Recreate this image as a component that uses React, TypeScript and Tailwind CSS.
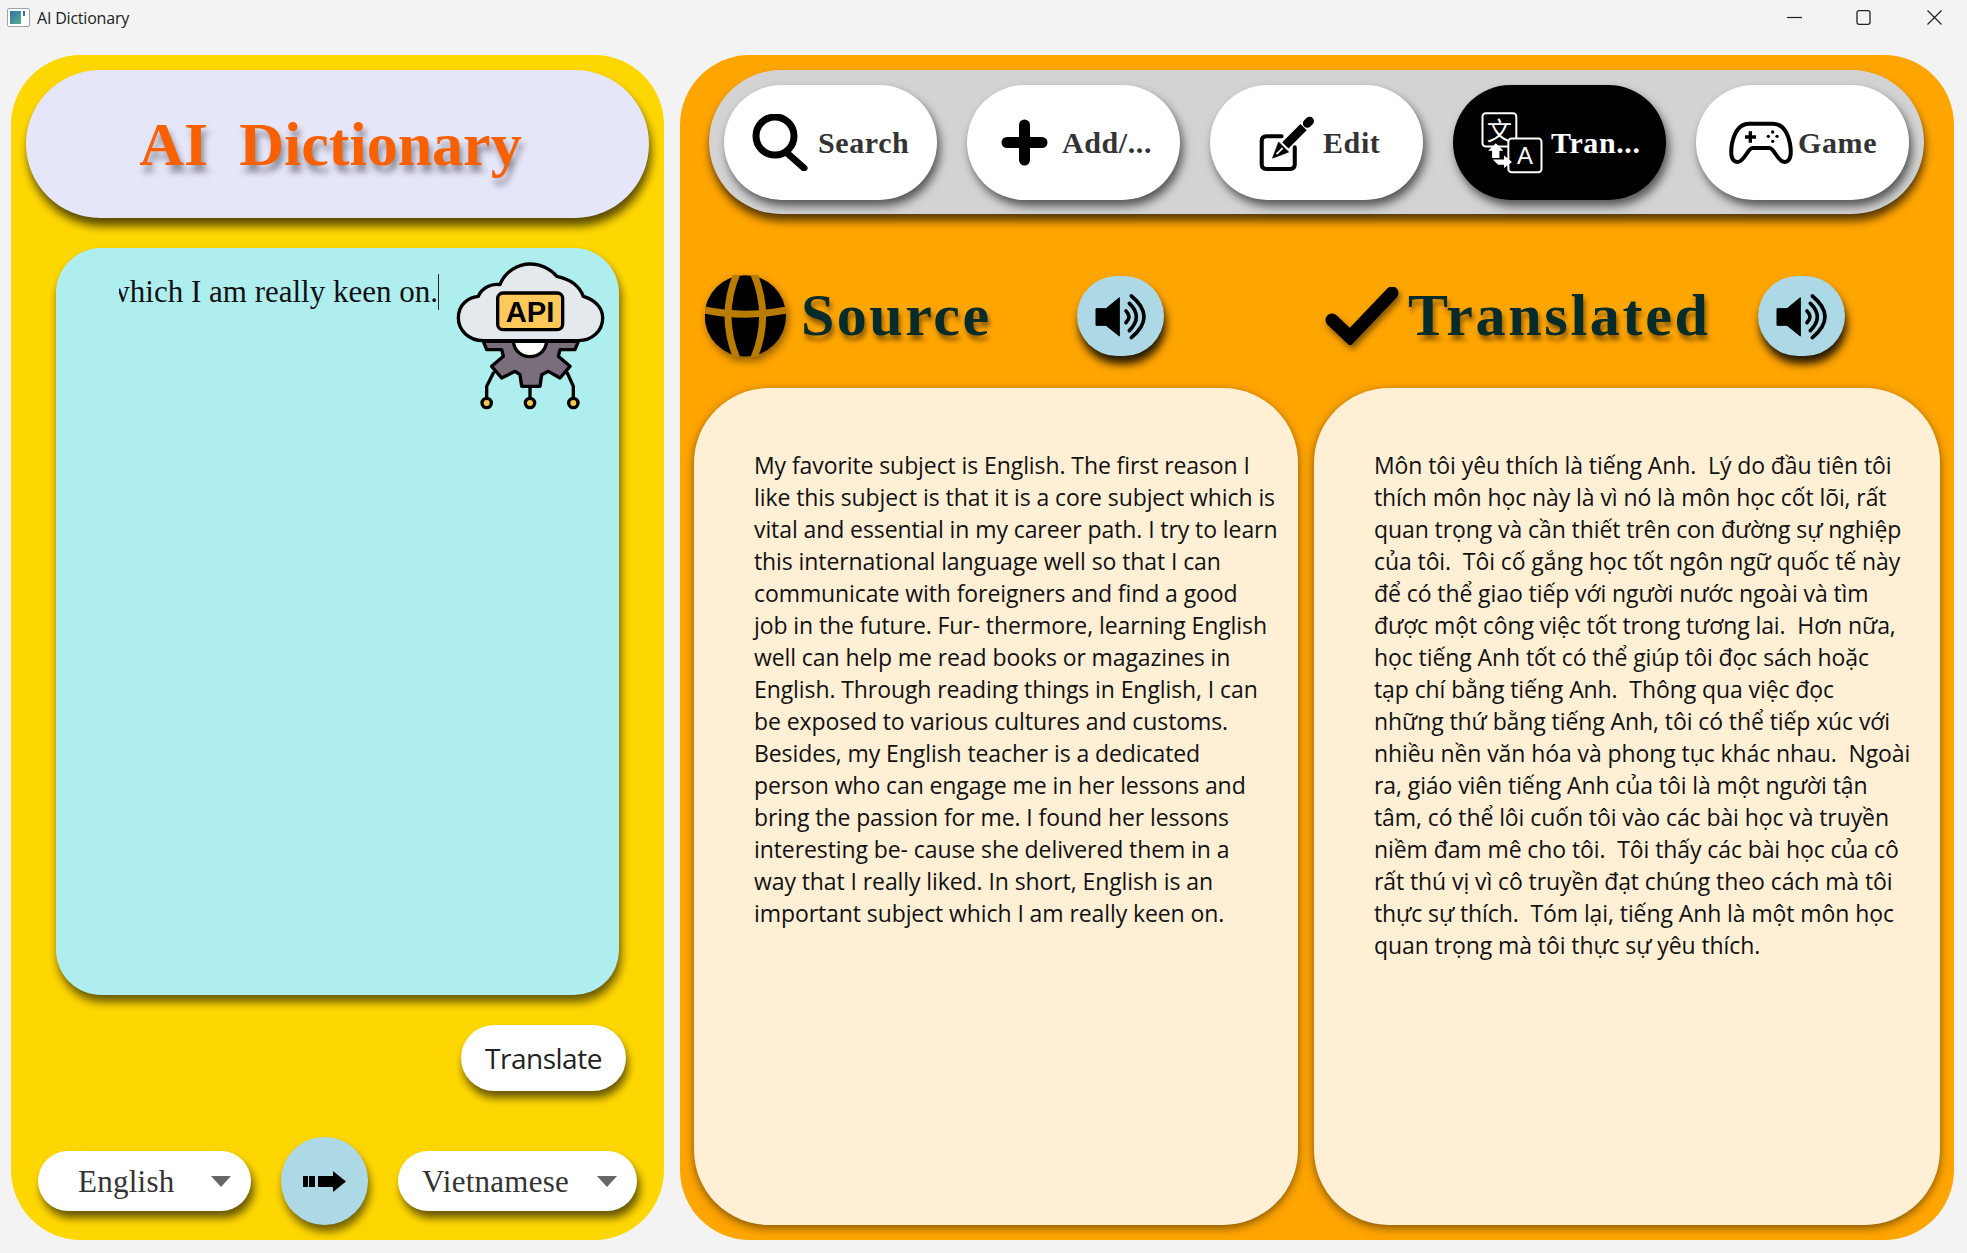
const sourceLines = [
  'My favorite subject is English. The first reason I',
  'like this subject is that it is a core subject which is',
  'vital and essential in my career path. I try to learn',
  'this international language well so that I can',
  'communicate with foreigners and find a good',
  'job in the future. Fur- thermore, learning English',
  'well can help me read books or magazines in',
  'English. Through reading things in English, I can',
  'be exposed to various cultures and customs.',
  'Besides, my English teacher is a dedicated',
  'person who can engage me in her lessons and',
  'bring the passion for me. I found her lessons',
  'interesting be- cause she delivered them in a',
  'way that I really liked. In short, English is an',
  'important subject which I am really keen on.',
];

const translatedLines = [
  'Môn tôi yêu thích là tiếng Anh.  Lý do đầu tiên tôi',
  'thích môn học này là vì nó là môn học cốt lõi, rất',
  'quan trọng và cần thiết trên con đường sự nghiệp',
  'của tôi.  Tôi cố gắng học tốt ngôn ngữ quốc tế này',
  'để có thể giao tiếp với người nước ngoài và tìm',
  'được một công việc tốt trong tương lai.  Hơn nữa,',
  'học tiếng Anh tốt có thể giúp tôi đọc sách hoặc',
  'tạp chí bằng tiếng Anh.  Thông qua việc đọc',
  'những thứ bằng tiếng Anh, tôi có thể tiếp xúc với',
  'nhiều nền văn hóa và phong tục khác nhau.  Ngoài',
  'ra, giáo viên tiếng Anh của tôi là một người tận',
  'tâm, có thể lôi cuốn tôi vào các bài học và truyền',
  'niềm đam mê cho tôi.  Tôi thấy các bài học của cô',
  'rất thú vị vì cô truyền đạt chúng theo cách mà tôi',
  'thực sự thích.  Tóm lại, tiếng Anh là một môn học',
  'quan trọng mà tôi thực sự yêu thích.',
];

const SearchIcon = () => (
  <svg width="56" height="57" viewBox="0 0 56 57" fill="none" stroke="black" strokeWidth="7">
    <circle cx="23" cy="22" r="19" />
    <path d="M35 39 L52 54" strokeWidth="7" strokeLinecap="round" />
  </svg>
);

const PlusIcon = () => (
  <svg width="47" height="47" viewBox="0 0 47 47" fill="none" stroke="black" strokeWidth="11" strokeLinecap="round">
    <path d="M23.5 6 V41 M6 23.5 H41" />
  </svg>
);

const EditIcon = () => (
  <svg width="56" height="56" viewBox="28 22 160 166" fill="none">
    <path d="M95 85 H50 Q36 85 36 99 V168 Q36 182 50 182 H120 Q134 182 134 168 V118" stroke="black" strokeWidth="12" strokeLinecap="round" />
    <path d="M106 112 L160 58" stroke="black" strokeWidth="26" />
    <path d="M171 47 L178 40" stroke="black" strokeWidth="26" strokeLinecap="round" />
    <path d="M68 150 L86 102 L116 132 Z" fill="black" stroke="black" strokeWidth="2" />
    <path d="M80 138 L98 120" stroke="white" strokeWidth="5" />
  </svg>
);

const TranslateIcon = () => (
  <svg width="64" height="63" viewBox="688 18 192 190" fill="none">
    <rect x="695" y="25" width="102" height="100" rx="10" stroke="white" strokeWidth="6" fill="black" />
    <text x="746" y="104" textAnchor="middle" fontSize="76" fill="white" fontFamily="'Noto Sans CJK SC', sans-serif">文</text>
    <rect x="773" y="101" width="100" height="102" rx="10" stroke="white" strokeWidth="6" fill="black" />
    <text x="823" y="178" textAnchor="middle" fontSize="72" fill="white" fontFamily="'Liberation Sans', sans-serif">A</text>
    <path d="M735 115 L758 138 H746 V160 H724 V138 H712 Z M726 164 H760 V152 L784 172 L760 190 V180 H742 Z" fill="white" />
  </svg>
);

const GameIcon = () => (
  <svg width="64" height="48" viewBox="24 26 192 134" fill="none" stroke="black" strokeWidth="12">
    <path d="M85 35 H155 C185 35 200 60 207 95 C212 125 210 150 190 150 C170 150 160 108 145 108 H95 C80 108 70 150 50 150 C30 150 28 125 33 95 C40 60 55 35 85 35 Z" fill="white" />
    <path d="M72 75 H105 M88 58 V92" strokeWidth="10" />
    <g fill="black" stroke="none">
      <circle cx="155" cy="60" r="5" />
      <circle cx="142" cy="73" r="5" />
      <circle cx="168" cy="73" r="5" />
      <circle cx="155" cy="88" r="5" />
    </g>
  </svg>
);

const GlobeIcon = () => (
  <svg width="81" height="82" viewBox="15 15 243 245" fill="none" className="drop-shadow-[2px_4px_4px_rgba(0,0,0,0.45)]">
    <circle cx="136" cy="137" r="122" fill="black" />
    <g stroke="#b87c00" strokeWidth="21">
      <path d="M113 5 Q55 137 113 270" />
      <path d="M159 5 Q217 137 159 270" />
      <path d="M5 118 Q136 146 267 118" />
    </g>
  </svg>
);

const CheckIcon = () => (
  <svg width="74" height="58" viewBox="0 0 74 58" fill="none" className="drop-shadow-[2px_4px_3px_rgba(0,0,0,0.5)]">
    <path d="M7 33 L25 50 L67 6" stroke="black" strokeWidth="13" strokeLinecap="round" />
  </svg>
);

const SpeakerIcon = () => (
  <svg width="70" height="60" viewBox="0 0 210 180" fill="none">
    <path d="M30 68 H60 L100 35 V150 L60 118 H30 Z" fill="black" stroke="black" strokeWidth="3" strokeLinejoin="round" />
    <g stroke="black" strokeWidth="11" strokeLinecap="round">
      <path d="M120 75 Q138 92 120 110" />
      <path d="M130 52 Q172 92 130 134" />
      <path d="M136 30 Q212 92 136 155" />
    </g>
  </svg>
);

const ApiIcon = () => (
  <svg width="160" height="156" viewBox="0 0 480 468" fill="none" stroke="black" strokeWidth="10">
    <path d="M352 345 L370 385 V420 M240 385 V420 M130 345 L110 385 V420" strokeLinecap="round" />
    <path d="M100 250 L110 275 H155 L160 295 L125 325 L155 360 L195 340 L210 350 L215 385 H270 L275 350 L295 340 L330 360 L360 325 L325 295 L330 275 H375 L385 250 Z" fill="#7b6e7c" strokeLinejoin="round" />
    <path d="M190 250 C193 282 218 296 240 296 C262 296 287 282 290 250 Z" fill="white" />
    <path d="M100 248 C55 248 25 215 25 180 C25 140 55 118 85 115 C95 90 125 75 150 80 C165 40 205 18 240 18 C275 18 305 35 320 55 C345 60 385 75 400 115 C435 125 458 150 458 180 C458 220 425 248 385 248 Z" fill="#e4e9ed" strokeLinejoin="round" />
    <rect x="143" y="105" width="195" height="110" rx="16" fill="#fec95a" />
    <text x="240" y="191" textAnchor="middle" fontSize="90" textLength="146" lengthAdjust="spacingAndGlyphs" fontWeight="700" fill="black" stroke="none" fontFamily="'Liberation Sans', sans-serif">API</text>
    <circle cx="110" cy="435" r="14" fill="#f7c64f" />
    <circle cx="240" cy="435" r="14" fill="#f7c64f" />
    <circle cx="370" cy="435" r="14" fill="#f7c64f" />
  </svg>
);

const ArrowIcon = () => (
  <svg width="43" height="21" viewBox="0 0 43 21" fill="black">
    <rect x="0" y="5" width="5" height="11" />
    <rect x="6" y="5" width="6" height="11" />
    <path d="M15 5 H30 V0 L43 10.5 L30 21 V16 H15 Z" />
  </svg>
);

const tabs = [
  { label: 'Search', icon: <SearchIcon />, gap: 'gap-[10px]', pad: 'pl-[28px]' },
  { label: 'Add/...', icon: <PlusIcon />, gap: 'gap-[14px]', pad: 'pl-[34px]' },
  { label: 'Edit', icon: <EditIcon />, gap: 'gap-[9px]', pad: 'pl-[48px]' },
  { label: 'Tran...', icon: <TranslateIcon />, gap: 'gap-[7px]', pad: 'pl-[27px]', active: true },
  { label: 'Game', icon: <GameIcon />, gap: 'gap-[5px]', pad: 'pl-[33px]' },
];

const Combo = ({ label, width, textPad }: { label: string; width: string; textPad: string }) => (
  <div className={`${width} ${textPad} h-[60px] flex items-center justify-between pr-[20px] bg-white rounded-[30px] shadow-[3px_7px_8px_rgba(0,0,0,0.6)]`}>
    <span className="pt-[3px] font-['Liberation_Serif',serif] text-[31px] tracking-[0.25px] text-[#333]">{label}</span>
    <span className="w-0 h-0 border-x-[10.5px] border-x-transparent border-t-[11px] border-t-[#666]" />
  </div>
);

const SpeakerButton = ({ className }: { className: string }) => (
  <button className={`${className} w-[87px] h-[80px] shrink-0 flex items-center justify-center rounded-full bg-[#add8e6] shadow-[2px_8px_8px_rgba(0,0,0,0.85)]`}>
    <SpeakerIcon />
  </button>
);

const headingClass = "font-['Liberation_Serif',serif] font-bold text-[60px] leading-none text-[#062b2b] whitespace-nowrap [text-shadow:2px_5px_5px_rgba(0,0,0,0.45)]";

const TextCard = ({ lines, width }: { lines: string[]; width: string }) => (
  <div className={`${width} h-[837px] pt-[61px] pl-[60px] bg-[#ffefd5] rounded-[75px] shadow-[0_3px_10px_rgba(0,0,0,0.5)] font-['Open_Sans',sans-serif] text-[23px] leading-[32px] text-[#111] tracking-[-0.09px]`}>
    {lines.map((line) => (
      <div key={line} className="whitespace-pre">{line}</div>
    ))}
  </div>
);

export default function App() {
  return (
    <div className="w-[1967px] h-[1253px] bg-[#f3f3f3] overflow-hidden flex flex-col">
      {/* Title bar */}
      <div className="h-[55px] shrink-0 flex justify-between pl-[7px] pr-[25px]">
        <div className="flex items-center h-[35px] gap-[7px]">
          <div className="w-[23px] h-[19px] border border-[#9aa5ad] rounded-[2px] bg-white p-[2px] flex gap-[2px]">
            <div className="w-[11px] bg-gradient-to-br from-[#3a6ea5] to-[#55b08a]" />
            <div className="w-[2px] h-[5px] bg-[#3a6ea5]" />
          </div>
          <span className="font-['Open_Sans',sans-serif] text-[16px] tracking-[-0.2px] text-[#222]">AI Dictionary</span>
        </div>
        <div className="flex items-start gap-[54px] pt-[10px]">
          <svg width="15" height="15" viewBox="0 0 15 15" stroke="#222" strokeWidth="1.2"><path d="M0 7.5 H15" /></svg>
          <svg width="15" height="15" viewBox="0 0 15 15" stroke="#222" strokeWidth="1.3" fill="none"><rect x="1" y="0.7" width="13" height="13.6" rx="2" /></svg>
          <svg className="ml-[2px]" width="15" height="15" viewBox="0 0 15 15" stroke="#222" strokeWidth="1.2"><path d="M0.5 0.5 L14.5 14.5 M14.5 0.5 L0.5 14.5" /></svg>
        </div>
      </div>

      <div className="flex pl-[11px] gap-[16px]">
        {/* Left panel */}
        <div className="w-[653px] h-[1185px] shrink-0 flex flex-col bg-[#ffd700] rounded-[70px]">
          <div className="mt-[15px] ml-[15px] w-[623px] h-[148px] pr-[14px] flex items-center justify-center rounded-[74px] bg-[#e6e6fa] shadow-[2px_8px_10px_rgba(0,0,0,0.65)]">
            <h1 className="font-['Liberation_Serif',serif] font-bold text-[62px] leading-none text-[#f86000] whitespace-pre [text-shadow:3px_7px_6px_rgba(0,0,0,0.4)]">AI  Dictionary</h1>
          </div>

          <div className="relative mt-[30px] ml-[45px] w-[563px] h-[747px] shrink-0 bg-[#afeeee] rounded-[45px] shadow-[2px_7px_10px_rgba(0,0,0,0.6)]">
            <div className="ml-[63px] mt-[26px] w-[320px] h-[36px] overflow-hidden flex justify-end">
              <div className="shrink-0 font-['Liberation_Serif',serif] text-[31px] leading-[36px] text-[#111] whitespace-nowrap border-r border-[#222]">
                which I am really keen on.
              </div>
            </div>
            <div className="absolute left-[394px] top-[10px]">
              <ApiIcon />
            </div>
          </div>

          <button className="mt-[30px] ml-[450px] w-[165px] h-[66px] rounded-[33px] bg-white shadow-[2px_7px_8px_rgba(0,0,0,0.6)] font-['Open_Sans',sans-serif] text-[28px] tracking-[-0.5px] text-[#222]">
            Translate
          </button>

          <div className="mt-[46px] ml-[27px] flex items-center gap-[30px]">
            <Combo label="English" width="w-[213px]" textPad="pl-[40px]" />
            <button className="w-[87px] h-[88px] flex items-center justify-center rounded-full bg-[#add8e6] shadow-[2px_7px_8px_rgba(0,0,0,0.55)]">
              <ArrowIcon />
            </button>
            <Combo label="Vietnamese" width="w-[239px]" textPad="pl-[24px]" />
          </div>
        </div>

        {/* Right panel */}
        <div className="w-[1274px] h-[1185px] shrink-0 flex flex-col bg-[#ffa500] rounded-[70px]">
          <div className="mt-[15px] ml-[29px] w-[1215px] h-[144px] shrink-0 pl-[15px] pt-[15px] flex gap-[30px] bg-[#d3d3d3] rounded-[72px] shadow-[1px_7px_8px_rgba(0,0,0,0.65)]">
            {tabs.map((tab) => (
              <button
                key={tab.label}
                className={`w-[213px] h-[115px] shrink-0 flex items-center rounded-[58px] shadow-[3px_6px_10px_rgba(0,0,0,0.6)] ${tab.pad} ${tab.gap} ${tab.active ? 'bg-black text-white' : 'bg-white text-[#333]'}`}
              >
                {tab.icon}
                <span className="font-['Liberation_Serif',serif] font-bold text-[30px] tracking-[0.6px] whitespace-nowrap">{tab.label}</span>
              </button>
            ))}
          </div>

          <div className="mt-[61px] ml-[14px] flex gap-[16px]">
            <div className="w-[604px] h-[82px] pl-[11px] flex items-center">
              <GlobeIcon />
              <span className={`${headingClass} ml-[15px] w-[189px] -mt-[2px] tracking-[2.5px]`}>Source</span>
              <SpeakerButton className="ml-[87px]" />
            </div>
            <div className="w-[626px] h-[82px] pl-[11px] flex items-center">
              <CheckIcon />
              <span className={`${headingClass} ml-[9px] w-[299px] -mt-[2px] tracking-[2.7px]`}>Translated</span>
              <SpeakerButton className="ml-[51px]" />
            </div>
          </div>

          <div className="mt-[31px] ml-[14px] flex gap-[16px]">
            <TextCard lines={sourceLines} width="w-[604px]" />
            <TextCard lines={translatedLines} width="w-[626px]" />
          </div>
        </div>
      </div>
    </div>
  );
}
